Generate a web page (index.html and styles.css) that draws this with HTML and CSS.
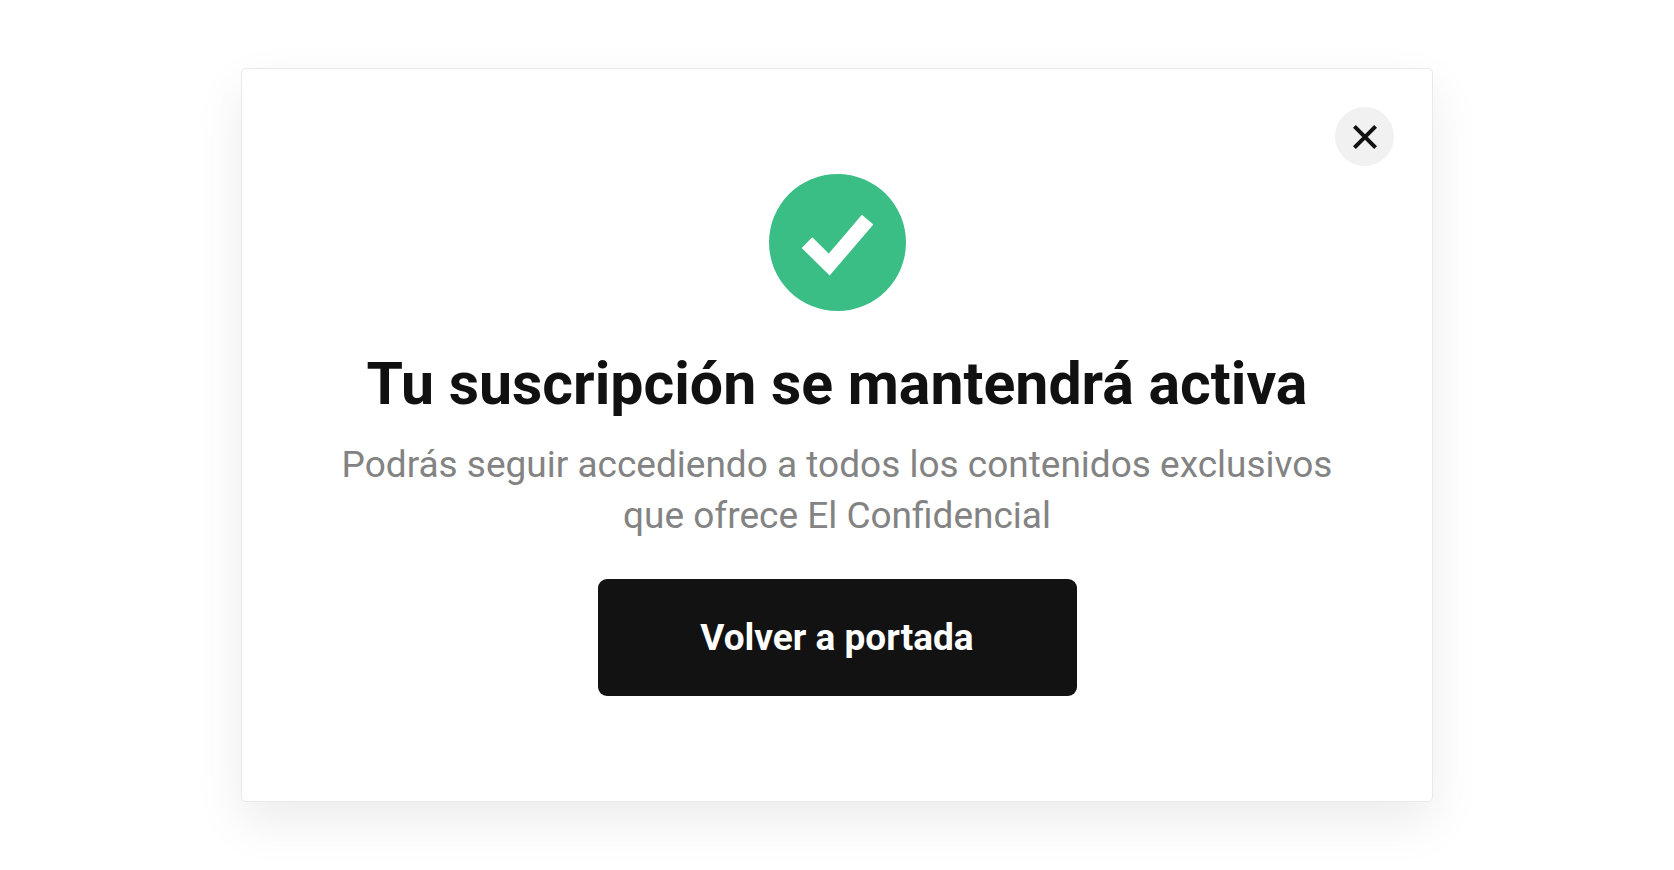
FILE: index.html
```html
<!DOCTYPE html>
<html lang="es">
<head>
  <meta charset="UTF-8" />
  <meta name="viewport" content="width=device-width, initial-scale=1.0"/>
  <title>Suscripción activa</title>
  <link rel="stylesheet" href="styles.css">
</head>
<body>

  <main class="page">
    <section class="modal" role="dialog" aria-labelledby="modalTitle">
      <button class="close-btn" type="button" aria-label="Cerrar">
        <svg class="close-icon" viewBox="0 0 24 24" aria-hidden="true">
          <path d="M1.4 1.4L22.6 22.6M22.6 1.4L1.4 22.6" fill="none" stroke="currentColor" stroke-width="4"/>
        </svg>
      </button>

      <svg class="check-icon" viewBox="0 0 137 137" aria-hidden="true">
        <circle cx="68.5" cy="68.5" r="68.5" fill="#3abe86"/>
        <path d="M38 68.6L60.2 90.6L98.6 45.6" fill="none" stroke="#fff" stroke-width="15"/>
      </svg>

      <h1 class="modal-title" id="modalTitle">Tu suscripción se mantendrá activa</h1>
      <p class="modal-text">Podrás seguir accediendo a todos los contenidos exclusivos que ofrece El Confidencial</p>
      <button class="home-btn" type="button">Volver a portada</button>
    </section>
  </main>

</body>
</html>
```
FILE: styles.css
```css
* { box-sizing: border-box; margin: 0; padding: 0; }
body { font-family: Roboto, Arial, sans-serif; background: #fff; color: #111; }
.page {
  display: flex; justify-content: center; align-items: center;
  min-height: 100vh; padding: 20px;
}
.modal {
  position: relative;
  display: flex; flex-direction: column; align-items: center;
  width: 100%; max-width: 1192px; padding: 105px 96px;
  background: #fff; border: 1px solid #e9e9e9; border-radius: 5px;
  box-shadow: 0 20px 49px rgba(0,0,0,0.08);
  text-align: center;
}
.close-btn {
  position: absolute; top: 38px; right: 38px;
  display: flex; align-items: center; justify-content: center;
  width: 59px; height: 59px;
  background: #f1f1f1; color: #111;
  border: none; border-radius: 50%; cursor: pointer;
}
.close-btn:hover { background: #e6e6e6; }
.close-icon { width: 24px; height: 24px; }
.check-icon { width: 137px; height: 137px; margin-bottom: 38px; }
.modal-title {
  font-size: 59px; line-height: 69px; font-weight: bold;
  margin-bottom: 21px;
}
.modal-text {
  font-size: 37px; line-height: 51px; color: #838383;
  margin-bottom: 38px;
}
.home-btn {
  width: 100%; max-width: 479px; padding: 33px 24px;
  background: #121212; color: #fff;
  border: none; border-radius: 9px;
  font-family: inherit; font-size: 37px; line-height: 51px; font-weight: bold;
  cursor: pointer;
}
.home-btn:hover { background: #2a2a2a; }
```
